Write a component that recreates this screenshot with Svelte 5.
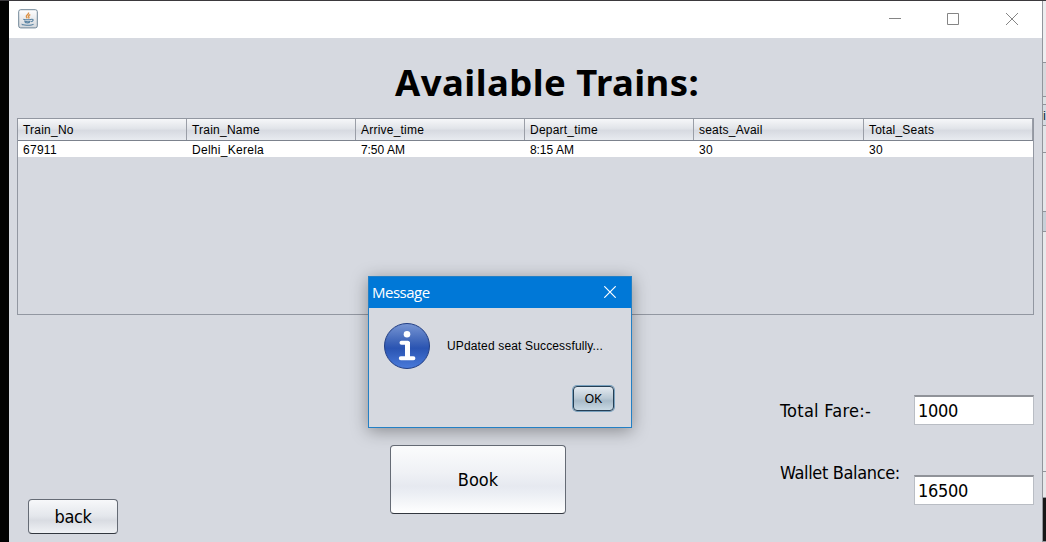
<script>
  const columns = ['Train_No', 'Train_Name', 'Arrive_time', 'Depart_time', 'seats_Avail', 'Total_Seats'];
  const rows = [['67911', 'Delhi_Kerela', '7:50 AM', '8:15 AM', '30', '30']];
</script>

<div class="desktop">
  <div class="left-edge"></div>
  <main class="window">
    <header class="titlebar">
      <svg class="java" width="20" height="20" viewBox="0 0 20 20">
        <defs>
          <linearGradient id="java-tile" x1="0" y1="0" x2="0" y2="1">
            <stop offset="0" stop-color="#fff" />
            <stop offset="1" stop-color="#d3d7dc" />
          </linearGradient>
        </defs>
        <rect x=".7" y=".7" width="18.6" height="18.2" rx="2" fill="url(#java-tile)" stroke="#6f8597" />
        <path d="M10.500 3.400c.8 2-3 2.700-2.100 4.500.3.700 1 1.200 1 1.200M12.300 5.700c-2.200.9-2 1.700-1.400 2.500.3.500-.2 1-.5 1.200" fill="none" stroke="#dc9144" stroke-width="1.400" />
        <path d="M5.300 10.200c2 .8 6.500.7 8.200 0M6.200 12.100c1.800.7 4.700.7 6.300.1M6.800 13.500c1.500.5 3.800.5 5.100 0M13.300 10.300c2.700-.6 2.300 2-.2 2.400M4.300 15c-1.600 1.400 9.500 1.700 11.200.1" fill="none" stroke="#527e9f" stroke-width="1.100" />
      </svg>
      <svg class="controls" width="130" height="20" viewBox="0 0 130 20" fill="none" stroke="#858585">
        <path d="M0 9.500h12M58.500 4.500h11v11h-11zM117 4l12 12M129 4l-12 12" />
      </svg>
    </header>

    <h1>Available Trains:</h1>

    <section class="table">
      <div class="row head">
        {#each columns as column}<span>{column}</span>{/each}
      </div>
      {#each rows as row}
        <div class="row data">
          {#each row as cell}<span>{cell}</span>{/each}
        </div>
      {/each}
    </section>

    <section class="bottom">
      <div class="back-cell"><button class="back">back</button></div>
      <div class="book-cell"><button class="book">Book</button></div>
      <div class="wallet">
        <span class="label fare">Total Fare:-</span>
        <span class="field">1000</span>
        <span class="label balance">Wallet Balance:</span>
        <span class="field">16500</span>
      </div>
    </section>
  </main>
  <aside class="behind">
    <i class="b1"></i><i class="b2"></i><i class="b3"></i><i class="b4">i</i><i class="b5"></i><i class="b6"></i><i class="b7"></i><i class="b8"></i><i class="b9"></i><i class="b10"></i>
  </aside>

  <div class="dialog">
    <div class="dialog-title">
      <span>Message</span>
      <svg width="12" height="12" viewBox="0 0 12 12" fill="none" stroke="#fff" stroke-width="1.200"><path d="M.3.3l11.400 11.400M11.700.3L.3 11.700" /></svg>
    </div>
    <div class="dialog-body">
      <svg width="48" height="48" viewBox="0 0 48 48">
        <defs>
          <linearGradient id="info-disc" x1="0" y1="0" x2="0" y2="1">
            <stop offset="0" stop-color="#7896d4" />
            <stop offset=".42" stop-color="#3c63b8" />
            <stop offset=".55" stop-color="#2a54b2" />
            <stop offset="1" stop-color="#4a7bdb" />
          </linearGradient>
        </defs>
        <circle cx="24" cy="24" r="22.500" fill="url(#info-disc)" stroke="#233f84" />
        <circle cx="24" cy="12.300" r="3.300" fill="#fff" />
        <path d="M18.500 20.800h6.300v13.700M17.800 36.200h12.600" fill="none" stroke="#fff" stroke-width="4" stroke-linecap="round" stroke-linejoin="round" />
        <path d="M22 20h5v16h-5z" fill="#fff" />
      </svg>
      <p>UPdated seat Successfully...</p>
    </div>
    <button class="ok">OK</button>
  </div>
</div>

<style>
  :global(body) { margin: 0; overflow: hidden; }
  .desktop {
    position: relative;
    display: flex;
    width: 1046px;
    height: 542px;
    overflow: hidden;
    box-sizing: border-box;
    border-top: 1px solid #3b393d;
    background: #000;
    color: #000;
    font-family: "DejaVu Sans Condensed", "DejaVu Sans", sans-serif;
    font-stretch: condensed;
  }
  .left-edge { width: 9px; background: #020202; }
  .window { width: 1033px; background: #d6d9e0; display: flex; flex-direction: column; }
  .titlebar {
    height: 37px;
    flex: none;
    box-sizing: border-box;
    background: #fff;
    display: flex;
    justify-content: space-between;
    padding: 8px 23px 0 9px;
  }
  h1 {
    margin: 0;
    padding-left: 386px;
    height: 80px;
    line-height: 88px;
    font-family: "Noto Sans", "Open Sans", sans-serif;
    font-stretch: normal;
    font-size: 36.5px;
    white-space: nowrap;
    letter-spacing: .44px;
  }
  .table {
    width: 1017px;
    height: 197px;
    flex: none;
    box-sizing: border-box;
    margin-left: 8px;
    border: 1px solid #9297a1;
    font-family: "Liberation Sans", Arial, sans-serif;
    font-size: 12px;
  }
  .row { display: grid; grid-template-columns: repeat(4, 169px) 170px 169px; }
  .head {
    height: 22px;
    box-sizing: border-box;
    border-bottom: 1px solid #7c828d;
    background: linear-gradient(#f6f7f9 0, #e1e4e9 45%, #d7dae1 55%, #e8ebf0 100%);
  }
  .head span { line-height: 22px; padding-left: 5px; border-right: 1px solid #9a9ea7; height: 21px; box-sizing: border-box; letter-spacing: .22px; }
  .data { height: 16px; background: #fff; }
  .data span { line-height: 18px; padding-left: 5px; letter-spacing: .28px; }
  .data span:nth-child(3), .data span:nth-child(4) { letter-spacing: -.1px; word-spacing: .5px; }
  .bottom { height: 227px; display: grid; grid-template-columns: 381px 390px 262px; }
  button {
    display: block;
    padding: 0;
    box-sizing: border-box;
    color: #000;
    font: 18px "DejaVu Sans Condensed", "DejaVu Sans", sans-serif;
    font-stretch: condensed;
    border: 1px solid #656b75;
    border-bottom-color: #32373f;
    border-radius: 4px;
    background: linear-gradient(#fbfcfd 0, #eff1f5 40%, #e6e9f0 60%, #eceff4 72%, #fff 100%);
  }
  .back-cell { padding: 184px 0 0 19px; }
  .back { width: 90px; height: 35px; letter-spacing: -.4px; background: linear-gradient(#f7f8fa, #e4e7ec 48%, #d9dce2 62%, #f0f2f5); }
  .book-cell { padding-top: 130px; }
  .book { width: 176px; height: 69px; }
  .wallet {
    display: grid;
    grid-template-columns: 134px 120px;
    grid-auto-rows: 30px;
    row-gap: 50px;
    padding-top: 80px;
    font-size: 18px;
  }
  .label { line-height: 31px; white-space: nowrap; }
  .fare { letter-spacing: .28px; }
  .balance { margin-top: -18px; letter-spacing: -.36px; }
  .field {
    box-sizing: border-box;
    border: 1px solid #b9bdc4;
    border-top: 2px solid #909399;
    background: #fff;
    padding-left: 3px;
    line-height: 28px;
    letter-spacing: -.3px;
  }
  .behind { width: 4px; display: flex; flex-direction: column; background: #e6e7e9; box-sizing: border-box; border-left: 1px solid #92969c; }
  .behind i { display: block; box-sizing: border-box; border-bottom: 1px solid #91949a; flex: none; overflow: hidden; }
  .b1 { height: 62px; background: #eeedef; }
  .b2 { height: 34px; background: #d8d8dc; }
  .b3 { height: 8px; background: #dce2e4; }
  .b4 { height: 21px; background: #d5dbe1; font: 13px/21px "Liberation Sans", sans-serif; color: #112d3b; }
  .b5 { height: 27px; background: #e3e5e8; }
  .b6 { height: 59px; background: #e5e6e9; }
  .b7 { height: 20px; background: #c8d0d8; }
  .b8 { height: 240px; background: #e9e9eb; }
  .b9 { height: 26px; background: #e7e7e9; }
  .b10 { height: 44px; background: #171717; }
  .dialog {
    position: absolute;
    left: 368px;
    top: 275px;
    width: 264px;
    height: 152px;
    box-sizing: border-box;
    border: 1px solid #2380c5;
    background: #d6d9e0;
    box-shadow: 0 3px 16px rgba(0, 0, 0, .36);
  }
  .dialog-title {
    height: 31px;
    display: flex;
    align-items: center;
    justify-content: space-between;
    padding: 0 15px 0 3px;
    background: #0078d7;
    color: #fff;
    font: 15px "Open Sans", sans-serif;
  }
  .dialog-title span { padding-bottom: 1px; letter-spacing: -.5px; }
  .dialog-title svg { margin-top: -1px; }
  .dialog-body { display: flex; padding: 14px 0 0 14px; height: 49px; }
  p { margin: 0; padding: 0 0 0 16px; font: 12px/49px "Liberation Sans", sans-serif; white-space: nowrap; letter-spacing: .15px; }
  .ok {
    width: 41px;
    height: 25px;
    margin: 15px 0 0 204px;
    font: 12px "Liberation Sans", sans-serif;
    border: 1px solid #253f55;
    box-shadow: 0 0 0 1px #78a0bd;
    background: linear-gradient(#e4eaf0, #bac9d5 48%, #a8bbc9 60%, #c8d8e3);
  }
</style>
